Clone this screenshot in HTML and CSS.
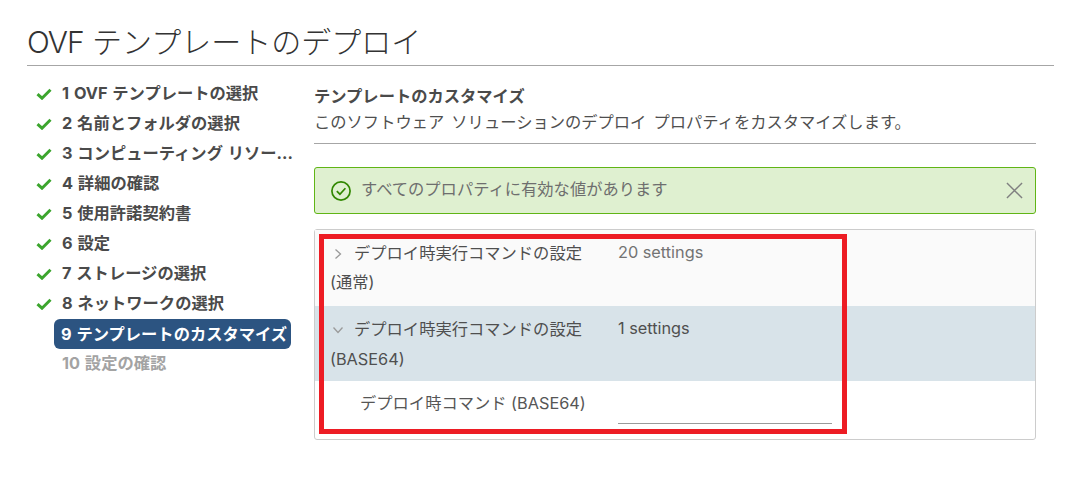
FILE: index.html
```html
<!DOCTYPE html>
<html lang="ja">
<head>
    <meta charset="UTF-8">
    <title>OVF テンプレートのデプロイ</title>
    <link rel="stylesheet" href="styles.css">
</head>
<body>
    <div class="wizard">
        <h1 class="wizard-title"><span class="title-latin">OVF</span> テンプレートのデプロイ</h1>

        <div class="wizard-body">
            <ul class="steps">
                <li class="step done"><svg class="check" viewBox="0 0 16 12"><path d="M1.5 6.2 L6 10.2 L14.5 1.8"/></svg><span>1 OVF テンプレートの選択</span></li>
                <li class="step done"><svg class="check" viewBox="0 0 16 12"><path d="M1.5 6.2 L6 10.2 L14.5 1.8"/></svg><span>2 名前とフォルダの選択</span></li>
                <li class="step done"><svg class="check" viewBox="0 0 16 12"><path d="M1.5 6.2 L6 10.2 L14.5 1.8"/></svg><span>3 コンピューティング リソー...</span></li>
                <li class="step done"><svg class="check" viewBox="0 0 16 12"><path d="M1.5 6.2 L6 10.2 L14.5 1.8"/></svg><span>4 詳細の確認</span></li>
                <li class="step done"><svg class="check" viewBox="0 0 16 12"><path d="M1.5 6.2 L6 10.2 L14.5 1.8"/></svg><span>5 使用許諾契約書</span></li>
                <li class="step done"><svg class="check" viewBox="0 0 16 12"><path d="M1.5 6.2 L6 10.2 L14.5 1.8"/></svg><span>6 設定</span></li>
                <li class="step done"><svg class="check" viewBox="0 0 16 12"><path d="M1.5 6.2 L6 10.2 L14.5 1.8"/></svg><span>7 ストレージの選択</span></li>
                <li class="step done"><svg class="check" viewBox="0 0 16 12"><path d="M1.5 6.2 L6 10.2 L14.5 1.8"/></svg><span>8 ネットワークの選択</span></li>
                <li class="step active"><span>9 テンプレートのカスタマイズ</span></li>
                <li class="step pending"><span>10 設定の確認</span></li>
            </ul>

            <div class="content">
                <div class="content-head">
                    <h2>テンプレートのカスタマイズ</h2>
                    <p>このソフトウェア ソリューションのデプロイ プロパティをカスタマイズします。</p>
                </div>

                <div class="alert">
                    <svg class="alert-icon" viewBox="0 0 20 20">
                        <circle cx="10" cy="10" r="9.1"/>
                        <path d="M5.8 10.2 L8.9 13.2 L14.4 7.2"/>
                    </svg>
                    <span class="alert-text">すべてのプロパティに有効な値があります</span>
                    <svg class="alert-close" viewBox="0 0 18 18"><path d="M1 1 L17 17 M17 1 L1 17"/></svg>
                </div>

                <div class="props">
                    <div class="group">
                        <div class="group-title">
                            <svg class="caret" viewBox="0 0 10 12"><path d="M2.5 1.5 L7.5 6 L2.5 10.5"/></svg>
                            <span class="group-name">デプロイ時実行コマンドの設定</span>
                            <span class="group-count">20 settings</span>
                        </div>
                        <div class="group-sub">(通常)</div>
                    </div>
                    <div class="group open">
                        <div class="group-title">
                            <svg class="caret" viewBox="0 0 12 10"><path d="M1.5 2.5 L6 7.5 L10.5 2.5"/></svg>
                            <span class="group-name">デプロイ時実行コマンドの設定</span>
                            <span class="group-count">1 settings</span>
                        </div>
                        <div class="group-sub">(BASE64)</div>
                    </div>
                    <div class="prop">
                        <span class="prop-label">デプロイ時コマンド (BASE64)</span>
                        <input class="prop-input" type="text">
                    </div>
                    <div class="callout"></div>
                </div>
            </div>
        </div>
    </div>
</body>
</html>
```

FILE: styles.css
```css
* {
    margin: 0;
    padding: 0;
    box-sizing: border-box;
    font-family: 'Inter', 'Noto Sans CJK JP', sans-serif;
}

body {
    background: #fff;
    color: #565656;
}

.wizard {
    padding: 22px 25px 0 27px;
}

.wizard-title {
    font-size: 30px;
    font-weight: 300;
    line-height: 40px;
    color: #333;
    padding-bottom: 3px;
    border-bottom: 1px solid #a6a6a6;
}

.title-latin {
    letter-spacing: -1px;
}

.wizard-body {
    display: flex;
    margin-top: 11px;
}

/* left step list */
.steps {
    list-style: none;
    width: 287px;
    flex-shrink: 0;
}

.step {
    display: flex;
    align-items: center;
    height: 30px;
    font-size: 16.3px;
    font-weight: 700;
    word-spacing: 1px;
    color: #4a4a4a;
    padding-left: 35px;
    white-space: nowrap;
}

.check {
    width: 16px;
    height: 12px;
    margin-left: -26px;
    margin-right: 10px;
    margin-top: 3px;
    flex-shrink: 0;
    fill: none;
    stroke: #3ca52e;
    stroke-width: 3;
}

.step.active {
    width: 237px;
    margin: 2px 0 -2px 27px;
    padding: 0 0 3px 7px;
    background: #2c5481;
    color: #fff;
    border-radius: 6px;
}

.step.pending {
    color: #a3a3a3;
}

/* right side */
.content {
    width: 722px;
    margin-top: 2px;
}

.content-head {
    height: 65px;
    padding-top: 5px;
    border-bottom: 1px solid #a6a6a6;
}

.content-head h2 {
    font-size: 16.3px;
    font-weight: 700;
    line-height: 24px;
    color: #4a4a4a;
}

.content-head p {
    font-size: 16.3px;
    line-height: 28px;
    word-spacing: 2.5px;
    color: #4f4f4f;
}

.alert {
    display: flex;
    align-items: center;
    height: 47px;
    margin-top: 23px;
    padding: 0 12px 0 16px;
    background: #dff0d0;
    border: 1px solid #60b515;
    border-radius: 3px;
}

.alert-icon {
    width: 20px;
    height: 20px;
    fill: none;
    stroke: #318700;
    stroke-width: 1.7;
}

.alert-text {
    flex: 1;
    margin-left: 10px;
    font-size: 16.3px;
    line-height: 26px;
    padding-bottom: 4px;
    color: #6e6e6e;
}

.alert-close {
    width: 17px;
    height: 17px;
    fill: none;
    stroke: #808080;
    stroke-width: 1.5;
}

.props {
    position: relative;
    height: 211px;
    margin-top: 15px;
    border: 1px solid #ccc;
    border-radius: 3px;
}

.group {
    height: 76px;
    padding: 9px 0 0 15px;
    background: #fafafa;
    font-size: 16.3px;
    color: #565656;
}

.group.open {
    height: 75px;
    background: #d8e3e9;
}

.group-title {
    display: flex;
    align-items: center;
    height: 26px;
}

.caret {
    width: 10px;
    height: 12px;
    margin-left: 3px;
    margin-top: 3px;
    flex-shrink: 0;
    fill: none;
    stroke: #9a9a9a;
    stroke-width: 1.3;
}

.open .caret {
    width: 12px;
    height: 10px;
    margin-left: 2px;
    margin-top: 4px;
}

.group-name {
    width: 264px;
    margin-left: 11px;
    color: #4f4f4f;
}

.open .group-name {
    margin-left: 10px;
}

.group-count {
    color: #737373;
}

.open .group-count {
    color: #4f4f4f;
}

.group-sub {
    margin-top: 5px;
    line-height: 24px;
    color: #4f4f4f;
}

.open .group-sub {
    margin-top: 6px;
}

.prop {
    display: flex;
    height: 58px;
    padding: 10px 0 0 45px;
    font-size: 16.3px;
}

.prop-label {
    width: 258px;
    line-height: 25px;
    color: #565656;
}

.prop-input {
    width: 214px;
    height: 33px;
    border: 0;
    border-bottom: 1px solid #9a9a9a;
    background: transparent;
}

/* red annotation drawn over the screenshot */
.callout {
    position: absolute;
    left: 4px;
    top: 4px;
    width: 528px;
    height: 200px;
    border: 5px solid #ed1c24;
}
```
